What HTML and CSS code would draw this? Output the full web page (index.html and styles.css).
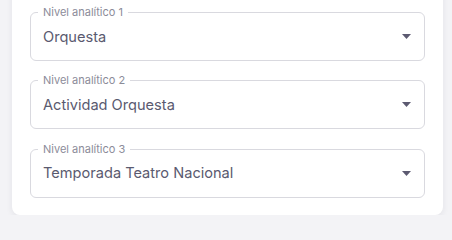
FILE: index.html
```html
<!DOCTYPE html>
<html lang="es">
<head>
<meta charset="utf-8">
<title>Niveles analíticos</title>
<link rel="stylesheet" href="styles.css">
</head>
<body>
<div class="card">
  <div class="fields">
    <div class="field">
      <span class="field-label">Nivel analítico 1</span>
      <span class="field-value">Orquesta</span>
      <svg class="arrow" width="9" height="5" viewBox="0 0 9 5"><path d="M0 0H9L4.5 5Z"/></svg>
    </div>
    <div class="field">
      <span class="field-label">Nivel analítico 2</span>
      <span class="field-value">Actividad Orquesta</span>
      <svg class="arrow" width="9" height="5" viewBox="0 0 9 5"><path d="M0 0H9L4.5 5Z"/></svg>
    </div>
    <div class="field">
      <span class="field-label">Nivel analítico 3</span>
      <span class="field-value">Temporada Teatro Nacional</span>
      <svg class="arrow" width="9" height="5" viewBox="0 0 9 5"><path d="M0 0H9L4.5 5Z"/></svg>
    </div>
  </div>
</div>
</body>
</html>
```

FILE: styles.css
```css
html, body {
  margin: 0;
  padding: 0;
  background: #f3f3f6;
  font-family: Inter, "Noto Sans", sans-serif;
}

.card {
  margin: -20px 9px 0 12px;
  padding: 32px 18px 17px 18px;
  background: #ffffff;
  border-radius: 0 0 8px 8px;
  box-shadow: 0 2px 6px rgba(40, 40, 70, 0.08);
}

.fields {
  display: flex;
  flex-direction: column;
  gap: 19.3px;
}

.field {
  position: relative;
  box-sizing: border-box;
  height: 49px;
  border: 1px solid #d9d9df;
  border-radius: 6px;
  display: flex;
  align-items: center;
  padding: 0 13px 0 12px;
}

.field-label {
  position: absolute;
  top: -8px;
  left: 7px;
  padding: 0 5px;
  background: #ffffff;
  font-size: 11px;
  line-height: 14px;
  color: #8c8c99;
}

.field-value {
  flex: 1;
  font-size: 14.6px;
  line-height: 20px;
  color: #5a5a6f;
}

.arrow {
  fill: #5c5a71;
  flex: none;
}
```
